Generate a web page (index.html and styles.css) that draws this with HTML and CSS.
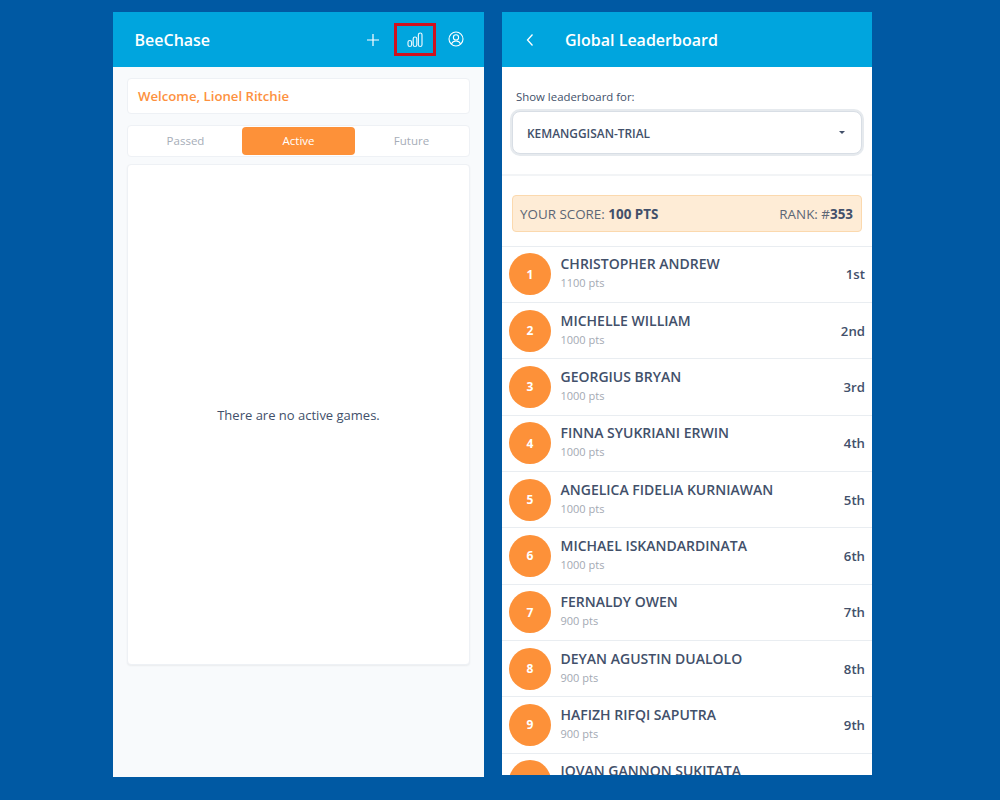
FILE: index.html
```html
<!DOCTYPE html>
<html lang="en">

<head>
    <meta charset="UTF-8">
    <meta name="viewport" content="width=device-width, initial-scale=1.0">
    <title>BeeChase</title>
    <link rel="stylesheet" href="styles.css">
</head>

<body>
    <section class="phone phone-home">
        <header class="topbar">
            <h1 class="brand">BeeChase</h1>
            <div class="actions">
                <button type="button" class="icon-btn btn-plus">
                    <svg width="16" height="16" viewBox="0 0 16 16" fill="none" stroke="#fff" stroke-width="1.2">
                        <path d="M8 2v12M2 8h12" />
                    </svg>
                </button>
                <button type="button" class="icon-btn btn-chart">
                    <svg width="16" height="16" viewBox="0 0 16 16" fill="none" stroke="#e4f6fd" stroke-width="1.2">
                        <rect x="1" y="8.5" width="3.6" height="6" rx="1.8" />
                        <rect x="6.2" y="5" width="3.6" height="9.5" rx="1.8" />
                        <rect x="11.4" y="1" width="3.6" height="13.5" rx="1.8" />
                    </svg>
                </button>
                <button type="button" class="icon-btn btn-user">
                    <svg width="16" height="16" viewBox="0 0 16 16" fill="none" stroke="#fff" stroke-width="1.1">
                        <circle cx="8" cy="8" r="7" />
                        <circle cx="8" cy="6.4" r="2.6" />
                        <path d="M3.4 13c.8-2 2.6-3 4.6-3s3.8 1 4.6 3" />
                    </svg>
                </button>
            </div>
        </header>
        <div class="home-body">
            <div class="welcome">Welcome, Lionel Ritchie</div>
            <div class="tabs">
                <span class="tab">Passed</span>
                <span class="tab tab-active">Active</span>
                <span class="tab">Future</span>
            </div>
            <div class="games">There are no active games.</div>
        </div>
    </section>

    <section class="phone phone-board">
        <header class="topbar">
            <svg class="back" width="10" height="14" viewBox="0 0 10 14" fill="none" stroke="#fff" stroke-width="1.3">
                <path d="M7.5 1.5 2.5 7l5 5.5" />
            </svg>
            <h1 class="brand">Global Leaderboard</h1>
        </header>
        <div class="picker">
            <p class="picker-label">Show leaderboard for:</p>
            <div class="select">
                <span>KEMANGGISAN-TRIAL</span>
                <i class="caret"></i>
            </div>
        </div>
        <div class="score">
            <span>YOUR SCORE: <b>100 PTS</b></span>
            <span>RANK: #<b>353</b></span>
        </div>
        <ul class="rows">
            <li class="row">
                <span class="num">1</span>
                <div class="who"><strong>CHRISTOPHER ANDREW</strong><small>1100 pts</small></div>
                <span class="place">1st</span>
            </li>
            <li class="row">
                <span class="num">2</span>
                <div class="who"><strong>MICHELLE WILLIAM</strong><small>1000 pts</small></div>
                <span class="place">2nd</span>
            </li>
            <li class="row">
                <span class="num">3</span>
                <div class="who"><strong>GEORGIUS BRYAN</strong><small>1000 pts</small></div>
                <span class="place">3rd</span>
            </li>
            <li class="row">
                <span class="num">4</span>
                <div class="who"><strong>FINNA SYUKRIANI ERWIN</strong><small>1000 pts</small></div>
                <span class="place">4th</span>
            </li>
            <li class="row">
                <span class="num">5</span>
                <div class="who"><strong>ANGELICA FIDELIA KURNIAWAN</strong><small>1000 pts</small></div>
                <span class="place">5th</span>
            </li>
            <li class="row">
                <span class="num">6</span>
                <div class="who"><strong>MICHAEL ISKANDARDINATA</strong><small>1000 pts</small></div>
                <span class="place">6th</span>
            </li>
            <li class="row">
                <span class="num">7</span>
                <div class="who"><strong>FERNALDY OWEN</strong><small>900 pts</small></div>
                <span class="place">7th</span>
            </li>
            <li class="row">
                <span class="num">8</span>
                <div class="who"><strong>DEYAN AGUSTIN DUALOLO</strong><small>900 pts</small></div>
                <span class="place">8th</span>
            </li>
            <li class="row">
                <span class="num">9</span>
                <div class="who"><strong>HAFIZH RIFQI SAPUTRA</strong><small>900 pts</small></div>
                <span class="place">9th</span>
            </li>
            <li class="row">
                <span class="num">10</span>
                <div class="who"><strong>JOVAN GANNON SUKITATA</strong><small>900 pts</small></div>
                <span class="place">10th</span>
            </li>
        </ul>
    </section>
</body>

</html>
```

FILE: styles.css
```css
* {
    box-sizing: border-box;
}

body {
    display: flex;
    gap: 18px;
    height: 800px;
    margin: 0;
    padding: 12px 0 0 113px;
    overflow: hidden;
    font-family: "Open Sans", sans-serif;
    color: #42506a;
    background-color: #0059a3;
}

.phone {
    display: flex;
    flex-direction: column;
    overflow: hidden;
}

.phone-home {
    width: 371px;
    height: 765px;
    background-color: #f8fafc;
}

.phone-board {
    width: 370px;
    height: 763px;
    background-color: #fff;
}

.topbar {
    display: flex;
    flex: none;
    align-items: center;
    height: 55px;
    padding-left: 21.5px;
    background-color: #00a5de;
}

.brand {
    margin: 0;
    font-size: 16px;
    font-weight: 600;
    color: #fff;
}

.actions {
    display: flex;
    align-items: center;
    margin-left: auto;
    padding-right: 17px;
}

.icon-btn {
    display: flex;
    justify-content: center;
    align-items: center;
    padding: 0;
    border: none;
    background: none;
}

.btn-plus {
    width: 22px;
    margin-right: 10px;
}

.btn-chart {
    width: 42px;
    height: 33px;
    margin-right: 9px;
    border: 3px solid #d0121f;
}

.btn-user {
    width: 22px;
    margin-top: -2px;
}

.home-body {
    display: flex;
    flex-direction: column;
    padding: 11px 14px 0;
}

.welcome {
    height: 36px;
    margin-bottom: 11px;
    padding-left: 10px;
    border: 1px solid #eef1f5;
    border-radius: 4px;
    font-size: 13.2px;
    font-weight: 600;
    line-height: 34px;
    color: #fd9140;
    background-color: #fff;
}

.tabs {
    display: grid;
    grid-template-columns: repeat(3, 1fr);
    height: 32px;
    margin-bottom: 7px;
    padding: 1px;
    border: 1px solid #eef1f5;
    border-radius: 4px;
    background-color: #fff;
}

.tab {
    border-radius: 4px;
    font-size: 11.5px;
    line-height: 28px;
    text-align: center;
    color: #a6adb8;
}

.tab-active {
    color: #fff;
    background-color: #fd9139;
}

.games {
    display: flex;
    justify-content: center;
    align-items: center;
    height: 501px;
    border: 1px solid #eef1f5;
    border-radius: 4px;
    font-size: 13px;
    background-color: #fff;
    box-shadow: 0 1px 2px rgba(0, 0, 0, 0.06);
}

.back {
    margin: 0 30px 0 1.5px;
}

.picker {
    flex: none;
    height: 109px;
    padding: 22px 10px 0;
    border-bottom: 2px solid #f2f4f6;
}

.picker-label {
    margin: 0 0 6px 4px;
    font-size: 11.4px;
    line-height: 16px;
}

.select {
    display: flex;
    justify-content: space-between;
    align-items: center;
    height: 43px;
    padding: 0 15px 0 14px;
    border: 1px solid #d8dee5;
    border-radius: 8px;
    font-size: 11.9px;
    font-weight: 600;
    background-color: #fff;
    box-shadow: 0 0 0 2px #e6eaee;
}

.caret {
    width: 0;
    height: 0;
    margin-right: 1px;
    border: 3px solid transparent;
    border-top: 3px solid #42506a;
    border-bottom: none;
}

.score {
    display: flex;
    flex: none;
    justify-content: space-between;
    align-items: center;
    height: 37px;
    margin: 19px 10px 13.5px;
    padding: 0 8px 0 7px;
    border: 1px solid #fbd9ae;
    border-radius: 4px;
    font-size: 13.4px;
    color: #5c6675;
    background-color: #feecd6;
}

.score b {
    color: #42506a;
}

.rows {
    margin: 0;
    padding: 0;
    list-style: none;
}

.row {
    display: flex;
    align-items: center;
    height: 56.35px;
    padding: 0 7px;
    border-top: 1px solid #e9edf1;
}

.num {
    display: flex;
    flex: none;
    justify-content: center;
    align-items: center;
    width: 42px;
    height: 42px;
    border-radius: 50%;
    font-size: 12px;
    font-weight: 700;
    color: #fff;
    background-color: #fd9139;
}

.who {
    display: flex;
    flex-direction: column;
    margin: -2px 0 0 9.5px;
}

.who strong {
    font-size: 14px;
    font-weight: 600;
    line-height: 18px;
}

.who small {
    margin-top: 2px;
    font-size: 11px;
    line-height: 16px;
    color: #a3a9b3;
}

.place {
    margin-left: auto;
    font-size: 13.2px;
    font-weight: 600;
}
```
